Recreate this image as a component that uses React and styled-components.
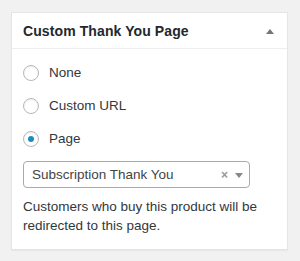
import styled, { createGlobalStyle } from "styled-components";

const GlobalStyle = createGlobalStyle`
  html, body {
    margin: 0;
    padding: 0;
    background: #f1f1f1;
  }
  body {
    font-family: "Liberation Sans", Arial, sans-serif;
    color: #32373c;
  }
`;

const Page = styled.div`
  padding: 12px 12px 13px 11px;
`;

const Box = styled.div`
  width: 277px;
  box-sizing: border-box;
  background: #fff;
  border: 1px solid #e5e5e5;
  box-shadow: 0 1px 1px rgba(0, 0, 0, 0.04);
`;

const Header = styled.div`
  height: 35px;
  display: flex;
  align-items: center;
  justify-content: space-between;
  padding: 0 13px 0 11px;
  border-bottom: 1px solid #eee;
`;

const Title = styled.h2`
  margin: 0;
  font-size: 14px;
  font-weight: 700;
  color: #23282d;
  letter-spacing: 0.1px;
`;

const Toggle = styled.span`
  width: 0;
  height: 0;
  border-left: 4px solid transparent;
  border-right: 4px solid transparent;
  border-bottom: 5px solid #72777c;
  margin-top: 1px;
`;

const Body = styled.div`
  padding: 7px 11px 14px;
  display: flex;
  flex-direction: column;
`;

const Option = styled.label`
  display: flex;
  align-items: center;
  gap: 10px;
  height: 33px;
  font-size: 13.5px;
  color: #32373c;
`;

const Radio = styled.span`
  width: 16px;
  height: 16px;
  box-sizing: border-box;
  border-radius: 50%;
  border: 1px solid #b4b9be;
  box-shadow: inset 0 1px 2px rgba(0, 0, 0, 0.07);
  display: flex;
  align-items: center;
  justify-content: center;
  &::after {
    content: "";
    display: ${(p) => (p.$checked ? "block" : "none")};
    width: 6px;
    height: 6px;
    border-radius: 50%;
    background: #1e8cbe;
  }
`;

const Select = styled.div`
  margin-top: 6px;
  width: 227px;
  height: 27px;
  box-sizing: border-box;
  border: 1px solid #aaa;
  border-radius: 4px;
  display: flex;
  align-items: center;
  padding: 0 6px 0 8px;
  font-size: 13.5px;
  color: #444;
`;

const Value = styled.span`
  flex: 1;
`;

const Clear = styled.span`
  color: #999;
  font-size: 12px;
  font-weight: 700;
  margin-right: 7px;
`;

const Caret = styled.span`
  width: 0;
  height: 0;
  border-left: 4px solid transparent;
  border-right: 4px solid transparent;
  border-top: 5px solid #888;
  margin-top: 1px;
`;

const Description = styled.p`
  margin: 9px 0 0;
  font-size: 13.5px;
  line-height: 19px;
  color: #32373c;
`;

const options = [
  { label: "None", checked: false },
  { label: "Custom URL", checked: false },
  { label: "Page", checked: true },
];

export default function App() {
  return (
    <Page>
      <GlobalStyle />
      <Box>
        <Header>
          <Title>Custom Thank You Page</Title>
          <Toggle />
        </Header>
        <Body>
          {options.map((o) => (
            <Option key={o.label}>
              <Radio $checked={o.checked} />
              {o.label}
            </Option>
          ))}
          <Select>
            <Value>Subscription Thank You</Value>
            <Clear>×</Clear>
            <Caret />
          </Select>
          <Description>
            Customers who buy this product will be redirected to this page.
          </Description>
        </Body>
      </Box>
    </Page>
  );
}
